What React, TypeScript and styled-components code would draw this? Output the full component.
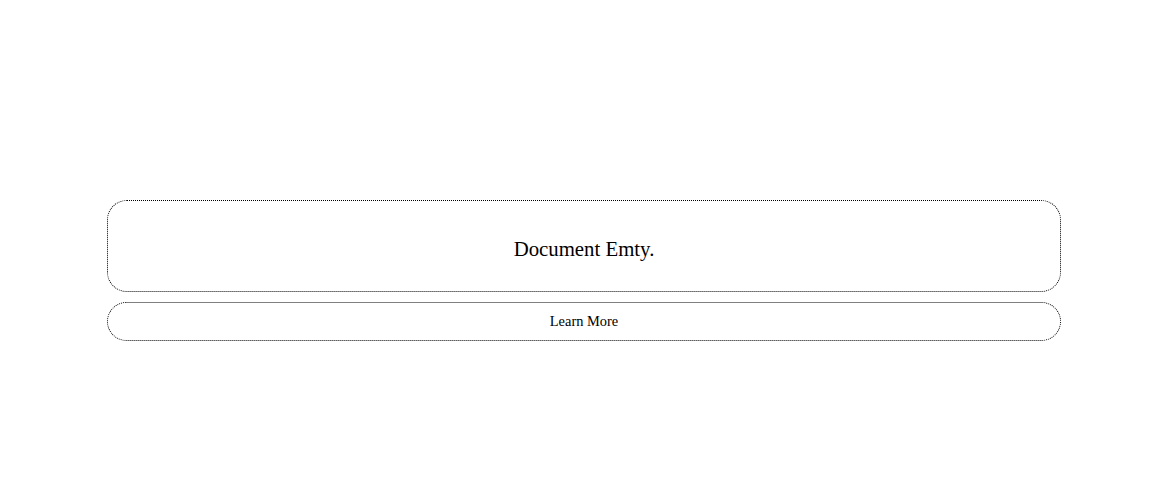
import styled, { createGlobalStyle } from 'styled-components';

const GlobalStyle = createGlobalStyle`
  html, body {
    margin: 0;
    padding: 0;
    background: #ffffff;
  }
  body {
    font-family: "Liberation Serif", "Times New Roman", serif;
    color: #000000;
  }
`;

const Page = styled.div`
  width: 1163px;
  height: 478px;
  display: flex;
  flex-direction: column;
  justify-content: flex-start;
  padding: 200px 102px 0 107px;
  box-sizing: border-box;
  gap: 10px;
`;

const Panel = styled.div`
  border: 1px dotted #000;
  border-radius: 20px;
  box-sizing: border-box;
  display: flex;
  justify-content: center;
  text-align: center;
`;

const EmptyBox = styled(Panel)`
  height: 92px;
  padding-top: 36px;
  font-size: 20.8px;
  line-height: 24px;
`;

const LearnButton = styled(Panel)`
  height: 39px;
  align-items: center;
  padding-bottom: 2px;
  font-size: 14.4px;
  line-height: 16px;
  cursor: pointer;
`;

export default function App() {
  return (
    <>
      <GlobalStyle />
      <Page>
        <EmptyBox>Document Emty.</EmptyBox>
        <LearnButton>Learn More</LearnButton>
      </Page>
    </>
  );
}
